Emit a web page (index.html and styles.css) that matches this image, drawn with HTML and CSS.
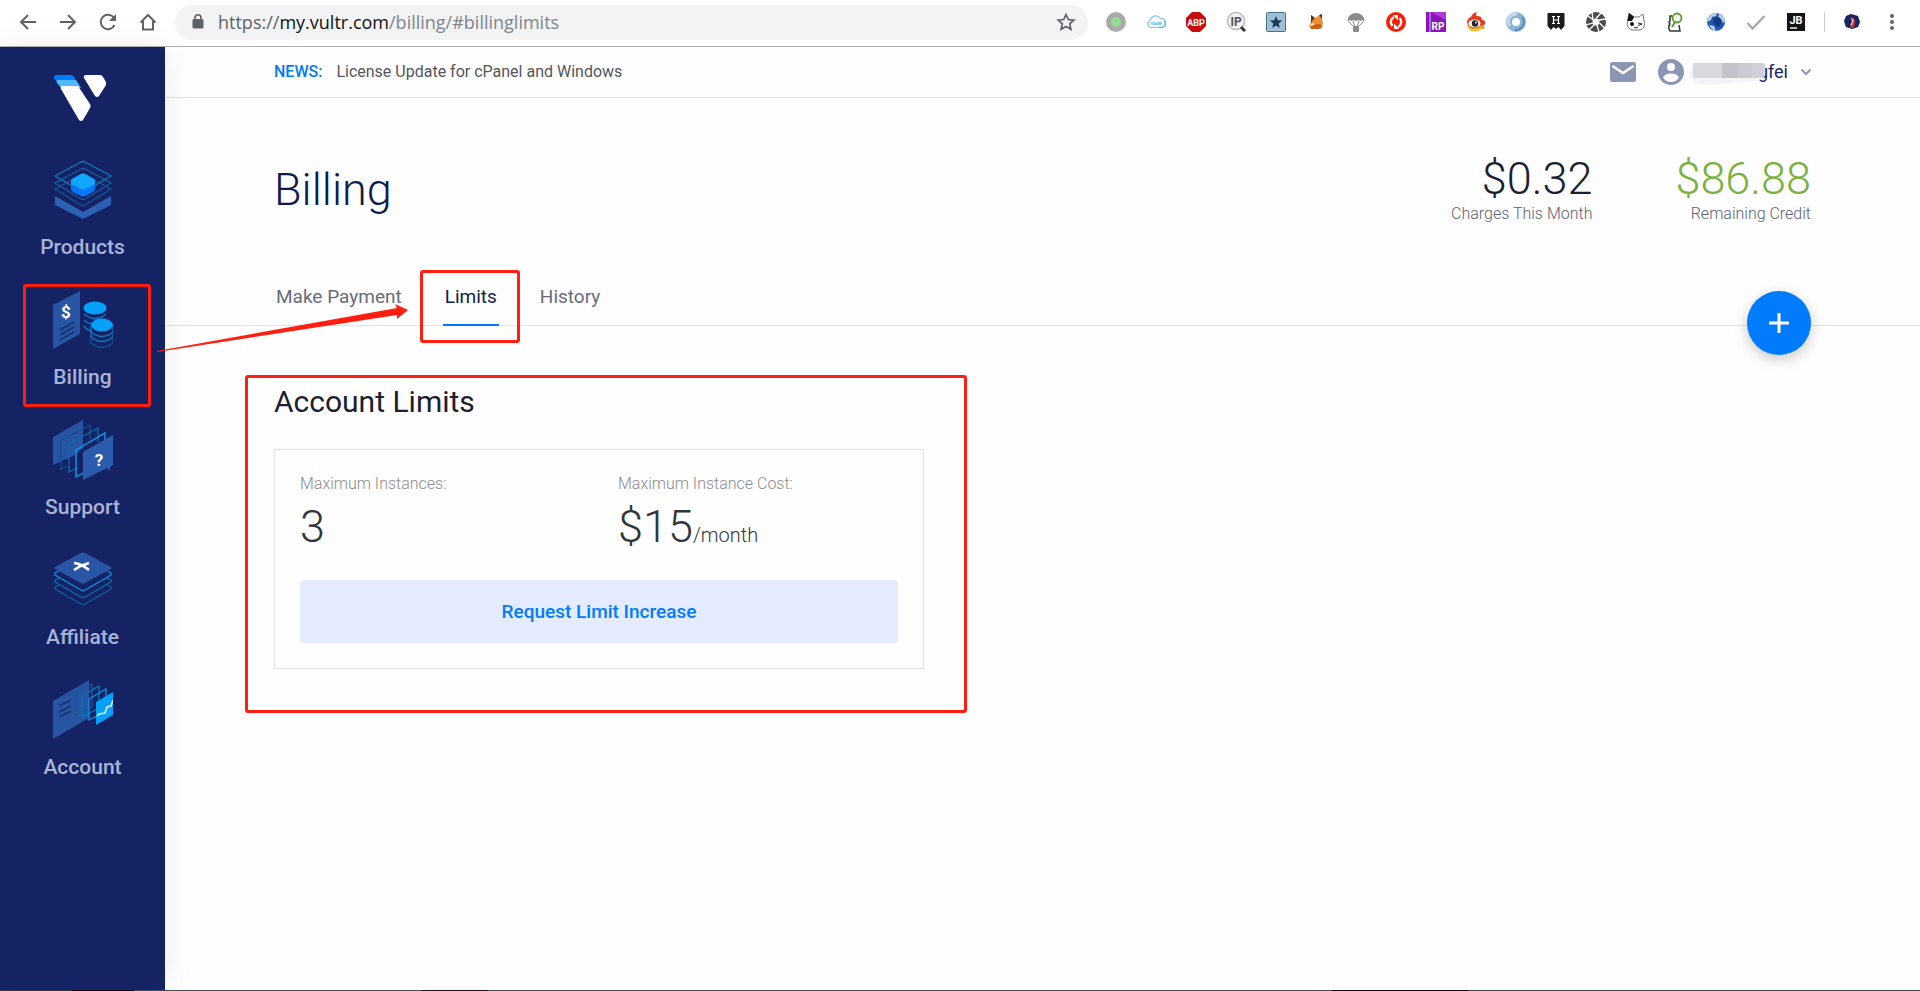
FILE: index.html
```html
<!DOCTYPE html>
<html lang="en">
<head>
<meta charset="utf-8">
<title>Billing - Vultr.com</title>
<link rel="stylesheet" href="styles.css">
</head>
<body>
<header class="toolbar">
  <button class="tool" aria-label="Back"><svg width="18" height="18" viewBox="0 0 18 18"><path class="line" d="M17 9H2M9 2L2 9l7 7"/></svg></button>
  <button class="tool" aria-label="Forward"><svg width="18" height="18" viewBox="0 0 18 18"><path class="line" d="M1 9h15M9 2l7 7-7 7"/></svg></button>
  <button class="tool" aria-label="Reload"><svg width="18" height="18" viewBox="0 0 18 18"><path class="line" d="M15.500 12A7.200 7.200 0 1 1 15 5"/><path fill="#5f6368" d="M17 1v7h-7z"/></svg></button>
  <button class="tool" aria-label="Home"><svg width="18" height="18" viewBox="0 0 18 18"><path class="line" d="M1.500 9.500L9 2l7.500 7.500M4 8v8.500h10V8"/></svg></button>
  <div class="omnibox">
    <svg width="12" height="16" viewBox="0 0 12 16"><rect y="5" x="0.500" width="11" height="9.500" rx="1.500" fill="#5f6368"/><path d="M3 6V3.800a3 3 0 0 1 6 0V6" fill="none" stroke="#5f6368" stroke-width="1.600"/></svg>
    <span class="url"><i>https://</i><b>my.vultr.com</b>/billing/#billinglimits</span>
    <svg width="20" height="20" viewBox="0 0 20 20"><path d="M10 2.500l2.300 5 5.500.6-4.100 3.700 1.200 5.400-4.900-2.800-4.900 2.800 1.200-5.400L2.200 8.100l5.500-.6z" fill="none" stroke="#5f6368" stroke-width="1.700"/></svg>
  </div>
  <div class="extensions">
    <button class="tool" aria-label="Status"><svg width="20" height="20"><circle cx="10" cy="10" r="10" fill="#aaa"/><circle cx="10" cy="10" r="5" fill="#93dc93"/></svg></button>
    <button class="tool" aria-label="YAAW"><svg width="20" height="20"><path d="M4.500 15.500a4 4 0 0 1 0-7.500 5.500 5.500 0 0 1 10-1.500 4.500 4.500 0 0 1 1 9z" fill="#f4fafd" stroke="#8cc8e0" stroke-width="1.200"/><path d="M13 15.500h3a4 4 0 0 0 2-7" fill="none" stroke="#4fc3f0" stroke-width="1.300"/><text x="10" y="12.500" class="yaaw">YAAW</text></svg></button>
    <button class="tool" aria-label="Adblock Plus"><svg width="20" height="20"><path d="M6 0h8l6 6v8l-6 6H6l-6-6V6z" fill="#c70d0d"/><text x="10" y="13.500" class="abp">ABP</text></svg></button>
    <button class="tool" aria-label="IP lookup"><svg width="20" height="20"><circle cx="10" cy="9" r="8.500" fill="#f0f3f3" stroke="#b8bcbd" stroke-width="1.500"/><path d="M15 15l4 4" stroke="#333" stroke-width="3"/><text x="10" y="13.500" class="ip">IP</text></svg></button>
    <button class="tool" aria-label="Bookmarks"><svg width="20" height="20"><rect x="0.500" y="0.500" width="19" height="19" rx="1" fill="#a0bfd2" stroke="#47728f"/><path d="M10 4l1.700 4.300 4.600.2-3.600 2.900 1.200 4.500-3.900-2.500-3.900 2.500 1.200-4.500-3.600-2.900 4.600-.2z" fill="#193d59"/></svg></button>
    <button class="tool" aria-label="Fox"><svg width="20" height="20"><path d="M5 3l4 3 5-3 2-1v6l1 3-1 5-3 1H5l-2-3 2-4z" fill="#ea8f34"/><path d="M5 3l4 3-3 3-1 2zM13 3l3-1v5z" fill="#5f351d"/><path d="M5 14l6-2 5 1-1 3-3 1H5z" fill="#c9601a"/><path d="M3 13l4-2 2 1-3 2z" fill="#f8dfc0"/></svg></button>
    <button class="tool" aria-label="Parachute"><svg width="20" height="20"><path d="M1.500 9a8.500 8 0 0 1 17 0q-2-1.500-3.500 0-2.500-1.500-5 0-2.500-1.500-5 0-1.500-1.500-3.500 0z" fill="#8b8b8b"/><path d="M2 9l6 6M7 9l2 6m4-6l-2 6m7-6l-6 6" stroke="#8b8b8b"/><rect x="7" y="14" width="6" height="6" rx="1" fill="#8b8b8b"/></svg></button>
    <button class="tool" aria-label="Sync"><svg width="20" height="20"><circle cx="10" cy="10" r="10" fill="#fb1c04"/><path d="M6.500 14A5.500 5.500 0 0 1 8 5M13.500 6A5.500 5.500 0 0 1 12 15" fill="none" stroke="#fff" stroke-width="2.400"/><path d="M7 3h5v5.500zM13 17H8v-5.500z" fill="#fff"/></svg></button>
    <button class="tool" aria-label="Axure RP"><svg width="20" height="20"><rect width="20" height="20" fill="#8b15bd"/><path d="M5 0h15v8z" fill="#ad3bd5"/><path d="M4 0v20" stroke="#e3b4f3"/><text x="12" y="17.500" class="rp">RP</text></svg></button>
    <button class="tool" aria-label="Weibo"><svg width="20" height="20"><ellipse cx="9" cy="14" rx="7.500" ry="5.500" fill="#f7c32e"/><path d="M1 11q0-5 4-6 1-4 6-5-2 3 0 4 5 0 5 4 4 0 3 4-1 3-6 2z" fill="#e83b1e"/><ellipse cx="8.500" cy="11.500" rx="6.500" ry="4.500" fill="#fff" stroke="#d7331c"/><circle cx="9" cy="11.500" r="3.200" fill="#222"/><circle cx="10" cy="10.500" r="1" fill="#fff"/><path d="M16 13l1 4" stroke="#f39b20" stroke-width="3"/></svg></button>
    <button class="tool" aria-label="Ring"><svg width="20" height="20"><circle cx="10" cy="10" r="7" fill="none" stroke="#8fb3d3" stroke-width="6"/><path d="M4 14a7.500 7.500 0 0 1 7-12" fill="none" stroke="#c5daeb" stroke-width="3"/><path d="M16 5a8 8 0 0 1-7 13" fill="none" stroke="#5d8ab8" stroke-width="2"/></svg></button>
    <button class="tool" aria-label="H badge"><svg width="20" height="20"><path d="M1.500 1h17v13l-3.500 4-2.500-3L10 17l-2.500-2L5 18l-3.500-4z" fill="#1d1d1d"/><path d="M6 4.500h3M11 4.500h3M6 11.500h3M11 11.500h3M7.500 4.500v7M12.500 4.500v7M7.500 8h5" fill="none" stroke="#fff" stroke-width="1.200"/></svg></button>
    <button class="tool" aria-label="Aperture"><svg width="20" height="20"><circle cx="10" cy="10" r="10" fill="#4b4b4b"/><circle cx="10" cy="10" r="3.500" fill="#fff"/><path d="M7 8L6 0m4 6.500L15 1m-2 7l7-1m-6.500 4l5 5M11 13l2 7m-5-7l-5 5m4-7l-7 2m7.500-5L2 4" stroke="#fff" stroke-width="1.300"/></svg></button>
    <button class="tool" aria-label="Cat"><svg width="20" height="20"><path d="M1.500 9L3 1l5 4h5l4-3 1 7q2 7-4 9H6q-6-2-4.500-9z" fill="#fff" stroke="#777"/><path d="M1.500 9L3 1l5 4-2 4z" fill="#151515"/><circle cx="6" cy="12" r="2" fill="#151515"/><path d="M12 11l4 1-4 1.500M8 15l2 1 2-1" fill="none" stroke="#222"/></svg></button>
    <button class="tool" aria-label="Person search"><svg width="20" height="20"><path d="M6 4H4v5q-2 1 0 3-2 2-1 5l1 2h10l-1-6" fill="none" stroke="#333" stroke-width="1.500"/><circle cx="11" cy="6" r="4.500" fill="#eef7e6" stroke="#5f9638" stroke-width="1.800"/><path d="M9 10l-3 5" stroke="#5f9638" stroke-width="2"/></svg></button>
    <button class="tool" aria-label="Globe"><svg width="20" height="20"><circle cx="10" cy="10" r="9" fill="#2457b0"/><path d="M3 5q3-4 8-4l-1 3-4 1-1 3-4 2q0-3 2-5zM13 2q5 2 6 7l-2 2-2-4-3-2zM3 13l5 1 2 5q-5-1-7-6z" fill="#b5d0f0"/><path d="M8 6l5-1 3 4-2 5-3 1-4-4z" fill="#153a86"/></svg></button>
    <button class="tool" aria-label="Check"><svg width="20" height="20"><path d="M1.500 11l5 5.500L18.500 4" fill="none" stroke="#a9a9a9" stroke-width="2.400"/></svg></button>
    <button class="tool" aria-label="JetBrains"><svg width="20" height="20"><rect x="1" y="1" width="18" height="18" fill="#151515"/><text x="10" y="11.500" class="jb">JB</text><path d="M4 16h7" stroke="#fff" stroke-width="1.400"/></svg></button>
  </div>
  <span class="divider"></span>
  <button class="tool" aria-label="Profile"><svg width="20" height="20"><circle cx="10" cy="10" r="9.500" fill="#f7f7f8"/><path d="M4 4l5-2 7 2 2 6-2 5-6 2-6-2-2-6z" fill="#14275f"/><path d="M8 5l4 1 1 4-1 5-3 1-1-3 2-3z" fill="#d73641"/><path d="M10 7l1 2-2 4" stroke="#fff" fill="none"/></svg></button>
  <button class="tool" aria-label="Browser menu"><svg width="20" height="20" fill="#5f6368"><circle cx="10" cy="4" r="2"/><circle cx="10" cy="10" r="2"/><circle cx="10" cy="16" r="2"/></svg></button>
</header>

<div class="app">
  <aside class="sidebar">
    <a class="logo" href="#" aria-label="Vultr"><svg width="52" height="46" viewBox="0 0 52 46">
      <path d="M2 0h15q2 0 3 2l3 5H3L0 3Q0 0 2 0z" fill="#007bfc"/>
      <path d="M3.500 5H22l5 8H7L2.500 7q0-2 1-2z" fill="#51b9ff"/>
      <path d="M8 11h16l12 18q1 2 0 4l-7 12q-2 2-4 0L7 14q-1-2 1-3z" fill="#fff"/>
      <path d="M32 0h14q2 0 3 2l3 5q1 2 0 3l-7 11q-2 2-4 0L30 3q-1-3 2-3z" fill="#fff"/></svg></a>
    <nav class="nav">
      <a class="nav-item" href="#products"><svg width="60" height="60" viewBox="0 0 60 60">
        <path d="M2 36l28 16 28-16v9L32 58q-2 1-4 0L2 45z" fill="#2b60b3"/>
        <g fill="none" stroke-width="1.300"><path d="M2 29l26-14q2-1 4 0l26 14-26 16q-2 1-4 0z" stroke="#125796"/><path d="M2 23L28 9q2-1 4 0l26 14-26 16q-2 1-4 0z" stroke="#11609f"/><path d="M2 16L28 2q2-1 4 0l26 14-26 15q-2 1-4 0z" stroke="#1179b9"/></g>
        <path d="M18 21q0-2 2-3l8-4q2-1 4 0l8 4q2 1 2 3v8q0 2-2 3l-8 4q-2 1-4 0l-8-4q-2-1-2-3z" fill="#0478f5"/><path d="M18 20l10-6q2-1 4 0l10 6v4l-10 5q-2 1-4 0l-10-5z" fill="#13a6ff"/></svg>
        <span>Products</span></a>
      <a class="nav-item" href="#billing"><svg width="60" height="60" viewBox="0 0 60 60">
        <path d="M0 15L27 1v43L0 59z" fill="#2755a3"/><path d="M7 40l14-8M7 45l14-8M7 50l14-8" stroke="#153470" stroke-width="1.600"/><text x="13" y="28" class="glyph">$</text>
        <g fill="none" stroke="#087bc6"><path d="M31 24q11 9 22 0M31 30q5 4 9 4M31 36q4 5 8 5" stroke-width="1.300"/></g><ellipse cx="42" cy="18" rx="11.500" ry="6.500" fill="#05a1f9"/>
        <ellipse cx="49" cy="35" rx="11" ry="6.500" fill="#05a1f9"/><g fill="none" stroke="#087bc6" stroke-width="1.300"><path d="M38 36v6q11 9 22 0v-6M38 42v5q11 9 22 0v-5"/><path d="M38 48v5q11 9 22 0v-5" stroke="#115695"/></g></svg>
        <span>Billing</span>
        <i class="mark mark-nav"></i>
        <svg class="arrow" width="252" height="52" viewBox="0 0 252 52"><path d="M0 49L240 6l-2-4 13 6-11 9v-4L0 50z" fill="#ff1f11"/></svg></a>
      <a class="nav-item" href="#support"><svg width="60" height="60" viewBox="0 0 60 60">
        <path d="M0 17L30 0v28L20 36l-20 9z" fill="#2755a3"/><g fill="none" stroke-width="1.300"><path d="M8 20L37 5v14M8 20v29l6-3" stroke="#144e8e"/><path d="M16 24L45 8v14M16 24v28l8-4" stroke="#096caf"/><path d="M23 30l29-17v27L30 53l-7 4z" stroke="#05a1f9"/></g>
        <path d="M30 32l30-17v30l-3 2v4l-3-3-20 10-4 2z" fill="#2a5bad"/><text x="46" y="46" class="glyph">?</text></svg>
        <span>Support</span></a>
      <a class="nav-item" href="#affiliate"><svg width="60" height="60" viewBox="0 0 60 60">
        <g fill="none" stroke-width="1.300"><path d="M6 35l-4 2q-1 1 0 2l26 15q2 1 4 0l26-15q1-1 0-2l-4-2" stroke="#11609f"/><path d="M6 28l-4 2q-1 1 0 2l26 15q2 1 4 0l26-15q1-1 0-2l-4-2" stroke="#0b6caf"/><path d="M6 21l-4 2q-1 1 0 2l26 15q2 1 4 0l26-15q1-1 0-2l-4-2" stroke="#0891df"/></g>
        <path d="M2 17L28 3q2-1 4 0l26 14q1 1 0 2L32 33q-2 1-4 0L2 19q-1-1 0-2z" fill="#2856a5"/><path d="M21 13q8 1 15 7M36 13q-8 2-15 7" stroke="#fff" stroke-width="2.400" fill="none"/></svg>
        <span>Affiliate</span></a>
      <a class="nav-item" href="#account"><svg width="60" height="60" viewBox="0 0 60 60">
        <path d="M0 21L36 0v38L0 59z" fill="#2755a3"/><path d="M6 26l12-6M6 32l12-6M6 37l12-6" stroke="#153470" stroke-width="1.600"/>
        <g fill="none" stroke-width="1.300"><path d="M22 13l17-9v23l-17 8z" stroke="#17579c"/><path d="M29 16l17-10v22l-17 9z" stroke="#0a76bd"/><path d="M36 19l17-10v22l-17 9z" stroke="#0891df"/></g>
        <path d="M43 22l17-10v23L43 45z" fill="#05a1f9"/><path d="M44 36l2-2 6-1 2-6 4-1 2-6" stroke="#d4f1ff" stroke-width="1.600" fill="none"/></svg>
        <span>Account</span></a>
    </nav>
  </aside>

  <main class="main">
    <div class="topbar">
      <p class="news"><strong>NEWS:</strong><a href="#news">License Update for cPanel and Windows</a></p>
      <button class="mail" aria-label="Messages"><svg width="26" height="20" viewBox="0 0 26 20"><rect width="26" height="20" rx="2.500" fill="#8b96b5"/><path d="M2.500 4L13 11 23.500 4" fill="none" stroke="#fff" stroke-width="2.400"/></svg></button>
      <button class="user">
        <svg width="26" height="26" viewBox="0 0 26 26"><circle cx="13" cy="13" r="13" fill="#8b96b5"/><circle cx="13" cy="8" r="4" fill="#fff"/><path d="M5 18.500q2-4 8-4t8 4q-3 4.500-8 4.500t-8-4.500z" fill="#fff"/></svg>
        <svg class="mask" width="76" height="26" viewBox="0 0 76 26"><path d="M10 4h64q2 0 1 8-2 7-8 10l-50 4Q0 24 0 14 1 4 10 4z" fill="#f3f4f7"/><path d="M3 4h29v15H3z" fill="#d9d8dd"/><path d="M32 4h16v15H32z" fill="#c4c2ca"/><path d="M48 4h14v15H48z" fill="#cbcad0"/><path d="M62 4h11q2 0 2 3l-1 12H62z" fill="#d0d1d8"/></svg>
        <span>gfei</span>
        <svg class="chevron" width="12" height="8" viewBox="0 0 12 8"><path d="M1.500 1.500L6 6l4.500-4.500" fill="none" stroke="#8b96b5" stroke-width="2"/></svg>
      </button>
    </div>

    <div class="heading">
      <div class="heading-row">
        <h1>Billing</h1>
        <dl class="stats">
          <div><dd>$0.32</dd><dt>Charges This Month</dt></div>
          <div class="credit"><dd>$86.88</dd><dt>Remaining Credit</dt></div>
        </dl>
      </div>
      <nav class="tabs">
        <a href="#billingmake">Make Payment</a>
        <a class="active" href="#billinglimits">Limits<i class="mark mark-tab"></i></a>
        <a href="#billinghistory">History</a>
      </nav>
      <button class="fab" aria-label="Deploy new"><svg width="22" height="22" viewBox="0 0 22 22"><path d="M11 1v20M1 11h20" stroke="#fff" stroke-width="3"/></svg></button>
    </div>

    <section class="limits">
      <h2>Account Limits</h2>
      <div class="card">
        <dl class="figures">
          <div><dt>Maximum Instances:</dt><dd>3</dd></div>
          <div><dt>Maximum Instance Cost:</dt><dd>$15<small>/month</small></dd></div>
        </dl>
        <button class="request">Request Limit Increase</button>
      </div>
      <i class="mark mark-card"></i>
    </section>
  </main>
</div>
<div class="taskbar"></div>
</body>
</html>
```
FILE: styles.css
```css
* { box-sizing: border-box; }
body {
  margin: 0;
  min-height: 100vh;
  display: flex;
  flex-direction: column;
  font-family: Roboto, "Liberation Sans", sans-serif;
  font-size: 16px;
  color: #1b2130;
  background: #fefefe;
}
button { border: 0; padding: 0; background: none; font: inherit; color: inherit; cursor: pointer; }
a { color: inherit; text-decoration: none; }
h1, h2, p, dl, dd { margin: 0; font-weight: 400; }
svg { display: block; flex: none; }
svg text { text-anchor: middle; font-family: Roboto, sans-serif; font-weight: 700; fill: #fff; }

.toolbar {
  display: flex;
  align-items: center;
  height: 47px;
  padding: 0 8px 2px;
  background: #fff;
  border-bottom: 1px solid #b1b1b3;
}
.tool { width: 40px; height: 36px; display: flex; align-items: center; justify-content: center; flex: none; }
.line { fill: none; stroke: #5f6368; stroke-width: 2; }
.omnibox {
  flex: 1;
  min-width: 0;
  height: 35px;
  margin: 0 8px 0 7px;
  padding: 0 12px 0 17px;
  display: flex;
  align-items: center;
  border-radius: 18px;
  background: #f1f3f4;
}
.url { flex: 1; margin-left: 14px; font: 18px/24px "Open Sans", "Noto Sans", sans-serif; color: #80868b; white-space: nowrap; overflow: hidden; }
.url i { font-style: normal; color: #5f6368; }
.url b { font-weight: 400; color: #111; }
.extensions { display: flex; }
.divider { width: 16px; height: 20px; flex: none; border-left: 1px solid #ccc; margin-left: 8px; margin-right: -8px; }
.abp { font-size: 9px; }
.ip { font-size: 12px; }
.rp { font-size: 10px; }
.jb { font-size: 11px; }
svg .ip { fill: #555; }
svg .yaaw { font-size: 4px; fill: #45b5e8; }

.app { flex: 1; display: flex; }
.sidebar {
  width: 165px;
  flex: none;
  padding-top: 28px;
  background: #152365;
  box-shadow: 0 0 30px rgba(0, 0, 0, 0.08);
  position: relative;
  z-index: 1;
}
.logo { display: block; width: 52px; margin: 0 auto 39px 54px; }
.nav-item {
  position: relative;
  display: flex;
  flex-direction: column;
  align-items: center;
  gap: 15px;
  height: 130px;
  font-size: 21px;
  line-height: 24px;
  font-weight: 500;
  color: #a9b3d6;
}
.nav-item .glyph { font-size: 17px; }

.mark { position: absolute; border: 3px solid #ff1f11; border-radius: 3px; pointer-events: none; }
.mark-nav { left: 23px; right: 14px; top: -6px; bottom: 13px; }
.mark-tab { left: -23px; right: -21px; top: -15px; bottom: -19px; }
.mark-card { left: -29px; right: -43px; top: -9px; bottom: -44px; }
.arrow { position: absolute; left: 157px; top: 12px; }

.main { flex: 1; min-width: 0; }
.topbar {
  display: flex;
  align-items: center;
  height: 51px;
  padding: 0 108px 0 109px;
  border-bottom: 1px solid #e3e3e5;
}
.news { flex: 1; line-height: 24px; color: #53565c; }
.news strong { margin-right: 14px; font-weight: 500; color: #007bfc; }
.mail { margin-right: 22px; }
.user { display: flex; align-items: center; font-size: 18px; line-height: 24px; color: #152365; }
.mask { margin: 0 -8px 0 6px; position: relative; }
.chevron { margin-left: 12px; }

.heading { position: relative; padding-top: 57px; }
.heading-row { display: flex; justify-content: space-between; padding: 0 109px; margin-bottom: 60px; }
h1 { font-size: 45px; line-height: 70px; font-weight: 300; color: #101b4c; }
.stats { display: flex; gap: 83px; text-align: right; font-weight: 300; }
.stats div { display: flex; flex-direction: column; }
.stats dd { font-size: 45px; line-height: 48px; font-weight: 300; }
.stats dt { font-size: 16px; line-height: 22px; color: #5c6170; }
.credit dd { color: #7ab142; }
.tabs { display: flex; gap: 39px; padding: 0 109px; border-bottom: 1px solid #e3e3e5; font-size: 19px; line-height: 24px; color: #676c7a; }
.tabs a { position: relative; padding: 0 2px 15px; margin-bottom: -1px; border-bottom: 2px solid transparent; }
.tabs .active { color: #101b4c; border-color: #007bfc; }
.fab {
  position: absolute;
  right: 109px;
  bottom: -29px;
  width: 64px;
  height: 64px;
  display: flex;
  align-items: center;
  justify-content: center;
  border-radius: 50%;
  background: #007bfc;
  box-shadow: 0 4px 14px rgba(0, 0, 0, 0.22);
}

.limits { position: relative; width: 650px; margin: 58px 0 60px 109px; }
h2 { margin-bottom: 29px; font-size: 30px; line-height: 36px; color: #1b2130; }
.card { padding: 22px 25px 25px; border: 1px solid #e0e1e3; }
.figures { display: grid; grid-template-columns: 1fr 1fr; column-gap: 38px; margin-bottom: 22px; font-weight: 300; }
.figures dt { font-size: 16px; line-height: 24px; color: #8a8b8e; }
.figures dd { font-size: 45px; line-height: 62px; font-weight: 300; color: #333639; }
.figures small { font-size: 20px; line-height: 24px; }
.request { display: block; width: 100%; height: 63px; border-radius: 4px; background: #e4ebfc; color: #007bfc; font-size: 19px; font-weight: 500; }

.taskbar { height: 1px; background: linear-gradient(90deg, #20444f 72px, #08090d 72px 134px, #2b5870 134px 422px, #10151a 422px 488px, #2b5870 488px 1332px, #08090d 1332px 1468px, #27496c 1468px); }
```
